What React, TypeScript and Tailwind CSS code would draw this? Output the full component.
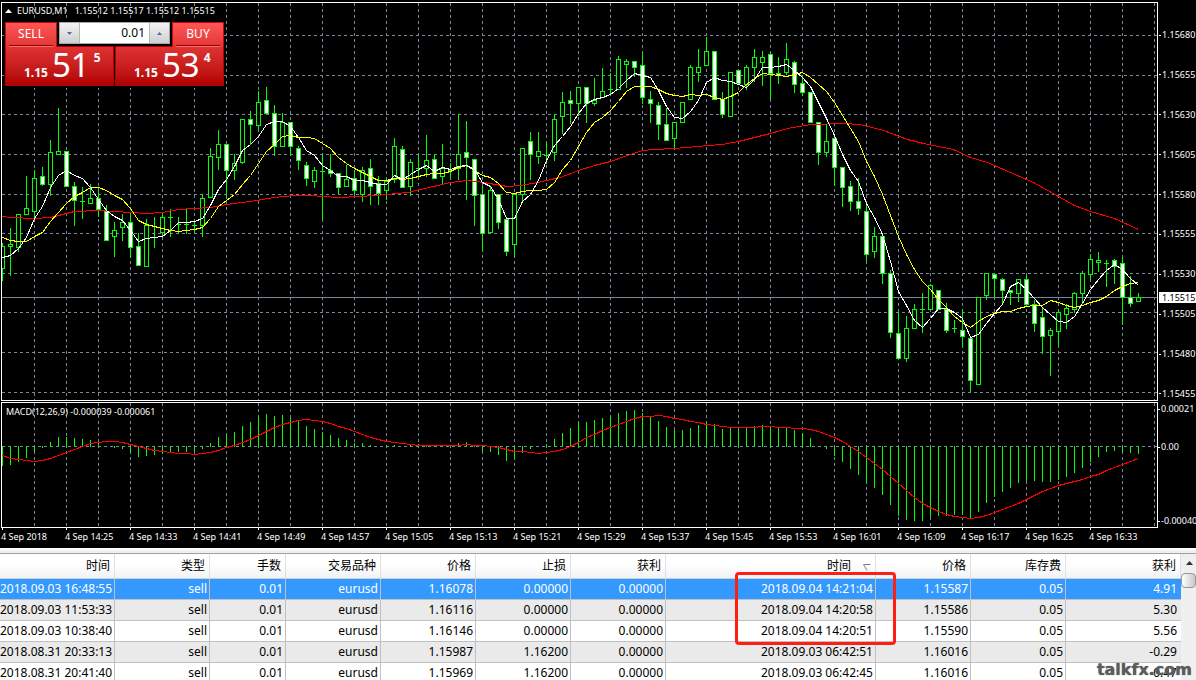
// [high, open, close, low] of every bar, on the vertical scale of the chart
type Bar = [number, number, number, number];

const bars: Bar[] = [
  [243, 268, 246, 280], [228, 246, 244, 275], [214, 247, 214, 251], [176, 214, 208, 214],
  [170, 211, 178, 218], [167, 176, 184, 185], [140, 184, 152, 195], [108, 154, 151, 154],
  [151, 151, 186, 186], [182, 186, 200, 225], [187, 201, 201, 218], [184, 203, 198, 203],
  [188, 198, 209, 216], [205, 211, 240, 240], [222, 236, 230, 256], [214, 227, 222, 240],
  [213, 222, 247, 257], [233, 246, 265, 265], [219, 266, 225, 266], [217, 226, 226, 247],
  [212, 232, 217, 236], [209, 217, 217, 236], [217, 224, 224, 233], [209, 224, 224, 233],
  [221, 225, 225, 231], [194, 225, 198, 236], [148, 197, 156, 197], [130, 157, 144, 169],
  [144, 144, 170, 198], [154, 170, 163, 179], [119, 162, 119, 163], [111, 119, 124, 144],
  [91, 125, 102, 129], [87, 100, 113, 113], [105, 113, 146, 155], [113, 146, 122, 146],
  [122, 122, 146, 155], [146, 148, 160, 169], [162, 165, 178, 185], [167, 181, 170, 187],
  [154, 171, 171, 218], [154, 170, 173, 176], [173, 173, 187, 193], [165, 186, 179, 186],
  [170, 178, 190, 196], [167, 194, 170, 201], [159, 168, 186, 204], [176, 183, 193, 204],
  [178, 190, 181, 199], [138, 179, 146, 182], [146, 149, 187, 187], [159, 186, 162, 195],
  [154, 168, 168, 177], [135, 168, 160, 176], [154, 159, 178, 178], [144, 176, 168, 184],
  [163, 170, 170, 177], [114, 168, 154, 179], [121, 152, 157, 199], [159, 159, 195, 225],
  [186, 194, 233, 250], [186, 232, 190, 232], [194, 194, 222, 228], [219, 219, 251, 255],
  [194, 244, 194, 256], [148, 194, 148, 201], [132, 141, 154, 179], [132, 156, 151, 163],
  [143, 155, 155, 163], [114, 152, 119, 160], [92, 116, 102, 133], [91, 100, 103, 123],
  [87, 103, 87, 115], [87, 87, 103, 122], [78, 103, 100, 105], [68, 97, 91, 97],
  [73, 89, 89, 94], [56, 89, 59, 89], [59, 64, 61, 87], [61, 61, 67, 76],
  [53, 65, 97, 103], [91, 99, 103, 122], [102, 105, 124, 139], [108, 124, 140, 140],
  [122, 138, 122, 149], [102, 122, 102, 122], [65, 99, 67, 99], [49, 72, 67, 81],
  [37, 65, 51, 65], [51, 51, 99, 99], [92, 99, 114, 117], [72, 116, 72, 116],
  [70, 70, 83, 83], [65, 84, 67, 89], [49, 67, 57, 81], [51, 62, 57, 85],
  [52, 54, 73, 98], [57, 73, 75, 83], [43, 72, 59, 74], [61, 62, 84, 92],
  [76, 83, 92, 95], [92, 92, 122, 122], [122, 122, 152, 164], [124, 152, 141, 156],
  [138, 138, 167, 185], [167, 167, 187, 206], [181, 186, 201, 210], [178, 201, 208, 214],
  [205, 211, 254, 261], [227, 251, 236, 257], [234, 236, 273, 283], [270, 273, 332, 337],
  [312, 333, 358, 358], [316, 358, 328, 361], [304, 328, 309, 328], [293, 309, 309, 332],
  [284, 309, 285, 309], [290, 290, 309, 309], [303, 309, 330, 332], [320, 328, 328, 332],
  [309, 330, 336, 346], [338, 338, 380, 391], [297, 384, 297, 384], [273, 295, 273, 299],
  [273, 274, 278, 296], [278, 279, 290, 302], [290, 290, 292, 304], [279, 293, 279, 301],
  [276, 279, 304, 304], [300, 304, 323, 331], [308, 317, 336, 353], [328, 335, 330, 375],
  [310, 331, 312, 345], [304, 314, 308, 328], [292, 309, 293, 312], [271, 293, 273, 303],
  [254, 274, 259, 279], [252, 262, 260, 271], [260, 263, 263, 286], [259, 260, 266, 283],
  [257, 263, 297, 324], [276, 297, 303, 306], [293, 301, 297, 301],
];

const macd = [
  466, 465, 462, 458, 452, 448, 442, 437, 437, 438, 439, 440, 442, 447, 448, 449, 452, 457, 456, 455,
  454, 453, 452, 452, 451, 449, 443, 437, 435, 432, 426, 422, 417, 414, 416, 415, 418, 421, 426, 429,
  432, 435, 438, 440, 443, 443, 445, 446, 445, 445, 446, 445, 444, 445, 445, 445, 445, 443, 442, 447,
  451, 452, 455, 461, 459, 453, 449, 446, 444, 439, 433, 428, 423, 422, 420, 418, 417, 413, 411, 410,
  413, 416, 421, 427, 430, 430, 428, 425, 422, 424, 429, 428, 429, 428, 426, 425, 427, 428, 427, 430,
  433, 438, 447, 449, 456, 462, 469, 475, 483, 488, 495, 505, 516, 520, 521, 521, 517, 516, 516, 515,
  515, 518, 512, 503, 497, 492, 488, 483, 481, 481, 482, 482, 480, 477, 473, 468, 462, 457, 452, 451,
  452, 453, 454,
];

const slowLine =
  "2,216 10,217 34,218 50,217 74,211 98,210 130,212 146,213 162,212 178,209 194,208 210,207 226,204 250,201 274,197 293,195 310,195 322,196 338,197 360,196 387,194 407,192 433,186 450,182 467,180 483,182 507,186 520,185 537,182 560,177 578,170 594,165 610,161 627,155 642,150 653,149 674,148 698,146 707,145 722,144 738,141 770,133 787,128 810,124 843,123 860,124 883,130 907,139 923,143 953,149 970,157 987,162 1010,172 1033,182 1058,196 1074,205 1090,211 1114,218 1138,229";

const barX = (i: number) => 2 + i * 8;

// simple moving average; `lead` holds the points before the window is full
function average(values: number[], period: number, lead: number[]) {
  return values
    .map((_, i) => {
      if (i < lead.length) return `${barX(i)},${lead[i]}`;
      const part = values.slice(i - period + 1, i + 1);
      const y = Math.round(part.reduce((a, b) => a + b, 0) / period);
      return `${barX(i)},${y}`;
    })
    .join(" ");
}

const closes = bars.map((b) => b[2]);
const fastLine = average(closes, 5, [257, 255, 248, 237]);
const midLine = average(closes, 10, [237, 240, 241, 241, 236, 232, 221, 212, 203]);
const signalLine = average(macd, 9, [455, 458, 459, 460, 461, 460, 458, 455]);

const gridX = Array.from({ length: 36 }, (_, i) => 34 + i * 32);
const gridY = [35, 75, 114, 154, 194, 233, 273, 312, 352, 392];

const prices = [
  "1.15680", "1.15655", "1.15630", "1.15605", "1.15580",
  "1.15555", "1.15530", "1.15505", "1.15480", "1.15455",
];

const times = [
  "2018", "14:25", "14:33", "14:41", "14:49", "14:57", "15:05", "15:13", "15:21",
  "15:29", "15:37", "15:45", "15:53", "16:01", "16:09", "16:17", "16:25", "16:33",
];

const columns = ["时间", "类型", "手数", "交易品种", "价格", "止损", "获利", "时间", "价格", "库存费", "获利"];

const orders = [
  ["2018.09.03 16:48:55", "sell", "0.01", "eurusd", "1.16078", "0.00000", "0.00000", "2018.09.04 14:21:04", "1.15587", "0.05", "4.91"],
  ["2018.09.03 11:53:33", "sell", "0.01", "eurusd", "1.16116", "0.00000", "0.00000", "2018.09.04 14:20:58", "1.15586", "0.05", "5.30"],
  ["2018.09.03 10:38:40", "sell", "0.01", "eurusd", "1.16146", "0.00000", "0.00000", "2018.09.04 14:20:51", "1.15590", "0.05", "5.56"],
  ["2018.08.31 20:33:13", "sell", "0.01", "eurusd", "1.15987", "1.16200", "0.00000", "2018.09.03 06:42:51", "1.16016", "0.05", "-0.29"],
  ["2018.08.31 20:41:40", "sell", "0.01", "eurusd", "1.15969", "1.16200", "0.00000", "2018.09.03 06:42:45", "1.16016", "0.05", "-0.47"],
];

function PriceChart() {
  return (
    <svg width="1155" height="397" viewBox="2 3 1155 397" shapeRendering="crispEdges" className="block" aria-hidden="true">
      <g stroke="#778899" strokeDasharray="3 3">
        {gridX.map((x) => <path key={x} d={`M${x + 0.5} 3V400`} />)}
        {gridY.map((y) => <path key={y} d={`M2 ${y + 0.5}H1157`} />)}
      </g>
      <path d="M2 297.5H1157" stroke="#778899" />
      {bars.map(([high, open, close, low], i) => {
        const x = barX(i);
        const top = Math.min(open, close);
        const size = Math.abs(open - close);
        return (
          <g key={i} stroke="#00ff00">
            <path d={`M${x + 0.5} ${high}V${low + 1}`} />
            {size === 0 ? (
              <path d={`M${x - 2} ${top + 0.5}h5`} />
            ) : (
              <rect x={x - 1.5} y={top + 0.5} width="4" height={size} fill={close > open ? "#fff" : "#000"} />
            )}
          </g>
        );
      })}
      <g fill="none" transform="translate(0.5 0.5)">
        <polyline points={slowLine} stroke="#ff0000" />
        <polyline points={midLine} stroke="#ffff00" />
        <polyline points={fastLine} stroke="#ffffff" />
      </g>
    </svg>
  );
}

function MacdChart() {
  return (
    <svg width="1155" height="124" viewBox="2 403 1155 124" shapeRendering="crispEdges" className="block" aria-hidden="true">
      <g stroke="#778899" strokeDasharray="3 3">
        {gridX.map((x) => <path key={x} d={`M${x + 0.5} 403V527`} />)}
        <path d="M2 446.5H1157" />
      </g>
      {macd.map((y, i) => (
        <path key={i} d={`M${barX(i) + 0.5} ${y < 446 ? 447 : 446}V${y}`} stroke="#00ff00" />
      ))}
      <polyline points={signalLine} fill="none" stroke="#ff0000" transform="translate(0.5 0.5)" />
    </svg>
  );
}

function AxisLabel({ text, className = "" }: { text: string; className?: string }) {
  return (
    <div className={`flex h-[14px] items-center ${className}`}>
      <span className="h-px w-[2px] shrink-0 bg-white" />
      <span className="ml-px">{text}</span>
    </div>
  );
}

type QuoteProps = { side: "SELL" | "BUY"; pips: string; point: string };

// L-shaped deal button: a short tab on top of the price block
function QuoteButton({ side, pips, point }: QuoteProps) {
  return (
    <button className={`flex w-[109px] flex-col text-white ${side === "BUY" ? "items-end" : "items-start"}`}>
      <span className="relative -mb-px flex h-[25px] w-[52px] justify-center border border-b-0 border-[#c80a0a] bg-linear-to-b from-[#ff5555] to-[#e23636] pt-[3px] text-[12px] leading-4">
        {side}
        <span className="absolute inset-x-[3px] bottom-0 h-[2px] border-t border-[#8c0000] bg-[#ff7070]" />
      </span>
      <span className="flex h-10 w-full items-baseline border border-[#b80000] bg-linear-to-b from-[#e03232] to-[#b00000] pl-[18px] leading-9">
        <b className="text-[12px]">1.15</b>
        <span className="ml-1 text-[33px]">{pips}</span>
        <b className="ml-1 self-start pt-[3px] text-[12px] leading-4">{point}</b>
      </span>
    </button>
  );
}

function DealPanel() {
  return (
    <div className="absolute top-[17px] left-[2px] flex w-[220px] justify-between bg-black py-[2px] pl-px">
      <QuoteButton side="SELL" pips="51" point="5" />
      <QuoteButton side="BUY" pips="53" point="4" />
      <div className="absolute top-[2px] left-[55px] flex h-[22px] w-[111px] border border-[#a8a8a8] bg-white">
        <button aria-label="Decrease volume" className="flex w-5 items-center justify-center border-r border-[#b8b8b8] bg-linear-to-b from-[#f4f4f4] to-[#cfcfcf]">
          <svg width="5" height="3" viewBox="0 0 5 3"><path d="M0 0h5L2.500 3z" fill="#5068b4" /></svg>
        </button>
        <input aria-label="Volume" defaultValue="0.01" className="w-0 flex-1 bg-white pr-1 text-right text-[12px] leading-5 text-black outline-none" />
        <button aria-label="Increase volume" className="flex w-5 items-center justify-center border-l border-[#b8b8b8] bg-linear-to-b from-[#f4f4f4] to-[#cfcfcf]">
          <svg width="5" height="3" viewBox="0 0 5 3"><path d="M0 3h5L2.500 0z" fill="#5068b4" /></svg>
        </button>
      </div>
    </div>
  );
}

function Charts() {
  return (
    <section className="relative shrink-0 overflow-hidden bg-black pt-[2px] pl-px font-['Noto_Sans',sans-serif] text-[9px] leading-[14px] whitespace-nowrap text-white">
      <div className="flex">
        <div className="relative h-[399px] min-w-0 flex-1 overflow-hidden border border-white">
          <PriceChart />
          <div className="absolute top-px left-[3px] flex items-center">
            <svg width="7" height="4" viewBox="0 0 7 4"><path d="M0 4L3.500 0L7 4z" fill="#fff" /></svg>
            <h1 className="ml-[5px]">EURUSD,M1&nbsp;&nbsp; 1.15512 1.15517 1.15512 1.15515</h1>
          </div>
          <DealPanel />
        </div>
        <div className="relative flex w-[38px] shrink-0 flex-col justify-between pt-[26px]">
          {prices.map((p) => <AxisLabel key={p} text={p} className="pl-px" />)}
          <span className="absolute top-[290px] right-0 left-px h-[11px] bg-white pl-[3px] leading-[11px] text-black">1.15515</span>
        </div>
      </div>
      <div className="mt-px flex">
        <div className="relative h-[126px] min-w-0 flex-1 overflow-hidden border border-white">
          <MacdChart />
          <h2 className="absolute top-[2px] left-1">MACD(12,26,9) -0.000039 -0.000061</h2>
        </div>
        <div className="w-[38px] shrink-0">
          <AxisLabel text="0.00021" />
          <AxisLabel text="0.00" className="mt-6" />
          <AxisLabel text="-0.00040" className="mt-[60px]" />
        </div>
      </div>
      <ol className="flex h-5">
        {times.map((t) => (
          <li key={t} className="w-16 shrink-0">
            <span className="ml-px block h-[2px] w-px bg-white" />
            4 Sep {t}
          </li>
        ))}
      </ol>
    </section>
  );
}

function History() {
  return (
    <section className="relative flex min-h-0 flex-1 border-t border-[#a0a0a0] bg-white font-['Noto_Sans','Noto_Sans_CJK_SC',sans-serif] text-[12px] leading-5 text-black">
      <div className="min-w-0 flex-1 overflow-hidden">
        <table className="w-full table-fixed border-separate border-spacing-0 text-right whitespace-nowrap">
          <colgroup>
            <col className="w-[115px]" />
            <col className="w-[95px]" />
            <col className="w-[76px]" />
            <col className="w-[95px]" />
            <col className="w-[95px]" />
            <col className="w-[95px]" />
            <col className="w-[95px]" />
            <col />
            <col className="w-[95px]" />
            <col className="w-[95px]" />
            <col className="w-[115px]" />
          </colgroup>
          <thead>
            <tr className="bg-linear-to-b from-white from-40% to-[#f0f1f3]">
              {columns.map((name, i) => (
                <th key={i} className="h-[25px] border-r border-b border-r-[#e0e0e0] border-b-[#d0d0d0] p-0 pr-1 font-normal">
                  {name}
                  {i === 7 && (
                    <svg width="8" height="7" viewBox="0 0 8 7" className="ml-3 inline-block align-[-1px]">
                      <path d="M7.500 .5H.5L4 6.500" fill="none" stroke="#808080" />
                    </svg>
                  )}
                </th>
              ))}
            </tr>
          </thead>
          <tbody>
            {orders.map((row, r) => (
              <tr key={r} className={r === 0 ? "bg-[#3399ff] text-white" : r % 2 ? "bg-[#eaeaea]" : "bg-white"}>
                {row.map((cell, c) => (
                  <td key={c} className="h-[21px] border-r border-b border-[#c0c0c0] p-0 pr-[2px] last:border-r-0 last:pr-1">
                    {cell}
                  </td>
                ))}
              </tr>
            ))}
          </tbody>
        </table>
      </div>
      <div className="flex w-[15px] shrink-0 flex-col bg-[#f0f0f0]">
        <svg width="15" height="19" viewBox="0 0 15 19"><path d="M5 11L8.500 7L12 11z" fill="#303030" /></svg>
        <span className="h-[15px] rounded-sm border border-[#989898] bg-linear-to-r from-white to-[#c8c8cc]" />
      </div>
      {/* marked close times */}
      <div className="absolute top-[18px] right-[300px] h-[73px] w-[161px] rounded border-3 border-[#ff1e14]" />
      <p className="absolute right-1 bottom-0 font-['DejaVu_Sans',sans-serif] text-[16px] font-bold text-[#5c5c5c] [text-shadow:0_0_1px_#5c5c5c]">
        talkfx.com
      </p>
    </section>
  );
}

export default function App() {
  return (
    <main className="flex h-screen flex-col overflow-hidden bg-[#f0f0f0]">
      <Charts />
      <div className="h-[5px] shrink-0 border-t-2 border-white" />
      <History />
    </main>
  );
}
